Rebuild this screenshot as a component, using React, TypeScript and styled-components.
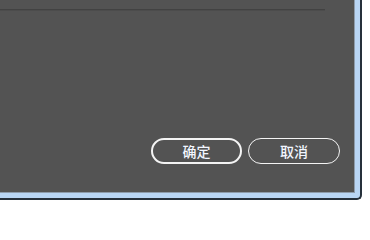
import React from "react";
import styled, { createGlobalStyle } from "styled-components";

const Global = createGlobalStyle`
  html, body { margin: 0; padding: 0; background: #ffffff; }
  body { font-family: "Noto Sans CJK SC", "Noto Sans", sans-serif; }
`;

const Frame = styled.div`
  box-sizing: border-box;
  width: 362px;
  height: 200px;
  padding: 0 5px 5px 0;
  background: #b9d6f5;
  border-right: 2px solid #26303b;
  border-bottom: 2px solid #26303b;
  border-bottom-right-radius: 5px;
  display: flex;
`;

const Panel = styled.div`
  box-sizing: border-box;
  flex: 1;
  background: #535353;
  border-right: 1px solid #8e9cab;
  border-bottom: 1px solid #8e9cab;
  display: flex;
  flex-direction: column;
  padding: 9px 14px 28px 0;
`;

const Separator = styled.div`
  width: 325px;
  height: 1px;
  background: #424242;
  border-bottom: 1px solid #4c4c4c;
`;

const Spacer = styled.div`
  flex: 1;
`;

const ButtonRow = styled.div`
  display: flex;
  justify-content: flex-end;
  gap: 6px;
`;

const DialogButton = styled.button<{ $primary?: boolean }>`
  box-sizing: border-box;
  width: ${(p) => (p.$primary ? "91px" : "92px")};
  height: 26px;
  border-radius: 13px;
  border: ${(p) => (p.$primary ? "2px" : "1px")} solid #f4f4f4;
  background: transparent;
  color: #f2f6ff;
  font-family: "Noto Sans CJK SC", "Noto Sans", sans-serif;
  font-size: 14px;
  font-weight: 500;
  line-height: 1;
  padding: 0 0 1px 0;
  display: flex;
  align-items: center;
  justify-content: center;
  letter-spacing: 0;
`;

export default function App() {
  return (
    <>
      <Global />
      <Frame>
        <Panel>
          <Separator />
          <Spacer />
          <ButtonRow>
            <DialogButton $primary>确定</DialogButton>
            <DialogButton>取消</DialogButton>
          </ButtonRow>
        </Panel>
      </Frame>
    </>
  );
}
